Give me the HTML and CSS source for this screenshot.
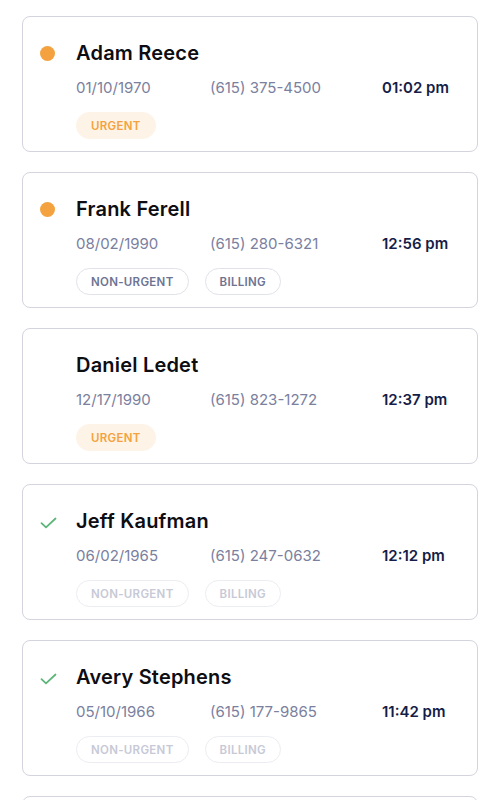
FILE: index.html
```html
<!DOCTYPE html>
<html lang="en">
<head>
    <meta charset="UTF-8">
    <meta name="viewport" content="width=device-width, initial-scale=1.0">
    <title>Calls</title>
    <link rel="stylesheet" href="styles.css">
</head>
<body>
<div class="list">
    <div class="card">
        <div class="status"><span class="dot"></span></div>
        <div class="info">
            <div class="name">Adam Reece</div>
            <div class="details">
                <span>01/10/1970</span>
                <span>(615) 375-4500</span>
                <span class="time">01:02 pm</span>
            </div>
            <div class="tags">
                <span class="tag urgent">URGENT</span>
            </div>
        </div>
    </div>

    <div class="card">
        <div class="status"><span class="dot"></span></div>
        <div class="info">
            <div class="name">Frank Ferell</div>
            <div class="details">
                <span>08/02/1990</span>
                <span>(615) 280-6321</span>
                <span class="time">12:56 pm</span>
            </div>
            <div class="tags">
                <span class="tag">NON-URGENT</span>
                <span class="tag">BILLING</span>
            </div>
        </div>
    </div>

    <div class="card">
        <div class="status"></div>
        <div class="info">
            <div class="name">Daniel Ledet</div>
            <div class="details">
                <span>12/17/1990</span>
                <span>(615) 823-1272</span>
                <span class="time">12:37 pm</span>
            </div>
            <div class="tags">
                <span class="tag urgent">URGENT</span>
            </div>
        </div>
    </div>

    <!-- done -->
    <div class="card done">
        <div class="status">
            <svg class="check" width="17" height="12" viewBox="0 0 17 12"><path d="M1.5 6.2 L6 10.3 L15.5 1.5" fill="none" stroke="#5db57a" stroke-width="1.8" stroke-linecap="round" stroke-linejoin="round"/></svg>
        </div>
        <div class="info">
            <div class="name">Jeff Kaufman</div>
            <div class="details">
                <span>06/02/1965</span>
                <span>(615) 247-0632</span>
                <span class="time">12:12 pm</span>
            </div>
            <div class="tags">
                <span class="tag">NON-URGENT</span>
                <span class="tag">BILLING</span>
            </div>
        </div>
    </div>

    <div class="card done">
        <div class="status">
            <svg class="check" width="17" height="12" viewBox="0 0 17 12"><path d="M1.5 6.2 L6 10.3 L15.5 1.5" fill="none" stroke="#5db57a" stroke-width="1.8" stroke-linecap="round" stroke-linejoin="round"/></svg>
        </div>
        <div class="info">
            <div class="name">Avery Stephens</div>
            <div class="details">
                <span>05/10/1966</span>
                <span>(615) 177-9865</span>
                <span class="time">11:42 pm</span>
            </div>
            <div class="tags">
                <span class="tag">NON-URGENT</span>
                <span class="tag">BILLING</span>
            </div>
        </div>
    </div>

    <div class="card"></div>
</div>
</body>
</html>
```

FILE: styles.css
```css
body {
    margin: 0;
    font-family: Inter, "Noto Sans", sans-serif;
    background-color: #ffffff;
}
.list {
    display: flex;
    flex-direction: column;
    gap: 20px;
    padding: 16px 22px 0 22px;
    height: 800px;
    box-sizing: border-box;
    overflow: hidden;
}
.card {
    display: flex;
    flex-shrink: 0;
    height: 136px;
    box-sizing: border-box;
    padding: 23px 28px 11px 16px;
    border: 1.5px solid #d3d4de;
    border-radius: 8px;
}
.status {
    width: 37px;
    flex-shrink: 0;
    padding-top: 6px;
}
.dot {
    display: block;
    width: 15px;
    height: 15px;
    margin-left: 1px;
    border-radius: 50%;
    background-color: #f4a23f;
}
.check {
    display: block;
    margin-left: 1px;
    margin-top: 3px;
}
.info {
    flex: 1;
}
.name {
    font-size: 20px;
    font-weight: 600;
    line-height: 26px;
    color: #0d0d12;
    letter-spacing: 0.2px;
}
.details {
    display: grid;
    grid-template-columns: 134px 172px auto;
    margin-top: 12px;
    font-size: 15px;
    line-height: 20px;
    color: #7a809e;
    white-space: nowrap;
}
.time {
    font-weight: 600;
    color: #151d48;
}
.tags {
    display: flex;
    gap: 16px;
    margin-top: 14px;
}
.tag {
    display: inline-flex;
    align-items: center;
    height: 27px;
    box-sizing: border-box;
    padding: 0 14px;
    border: 1.5px solid #e1e2ea;
    border-radius: 14px;
    font-size: 11.5px;
    font-weight: 600;
    letter-spacing: 0.3px;
    color: #6d7392;
}
.tag.urgent {
    border-color: #fdf3e6;
    background-color: #fdf3e6;
    color: #f4a23f;
}
.done .tag {
    color: #c7c9d6;
    border-color: #ecedf2;
}
```
